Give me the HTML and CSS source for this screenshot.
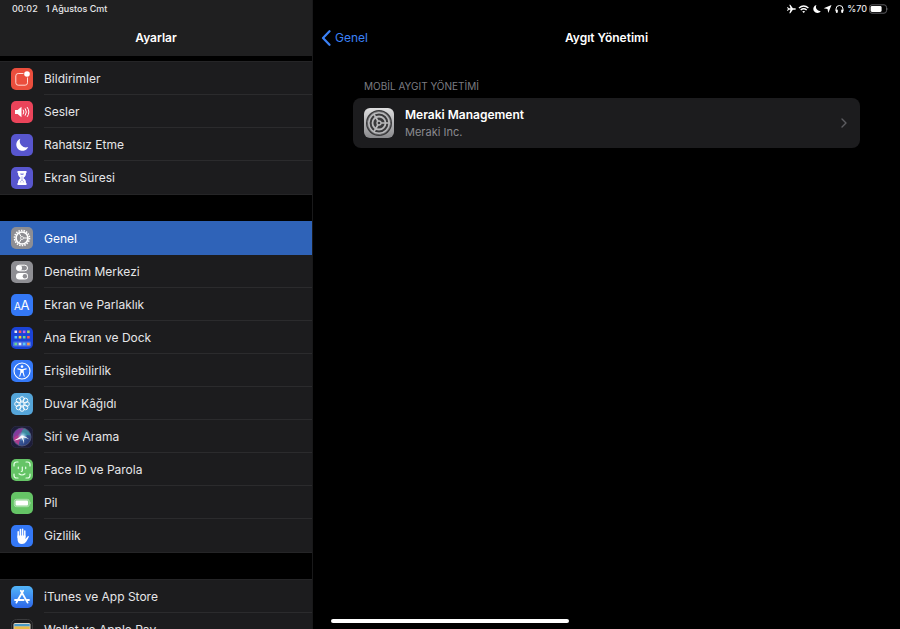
FILE: index.html
```html
<!DOCTYPE html>
<html lang="tr">
<head>
<meta charset="utf-8">
<meta name="viewport" content="width=device-width, initial-scale=1">
<title>Ayarlar</title>
<link rel="stylesheet" href="styles.css">
</head>
<body>
<div class="screen">
  <aside class="sidebar">
    <header class="bar bar-side">
      <div class="status"><time>00:02</time><span>1 Ağustos Cmt</span></div>
      <h1 class="title">Ayarlar</h1>
    </header>
    <nav class="menu">
      <ul class="group">
        <li><a class="row" href="#bildirimler">
          <svg class="icon" viewBox="0 0 22 22"><rect width="22" height="22" rx="5" fill="#eb4e3d"/><path d="M12.500 5.500H7.200a2.400 2.400 0 0 0-2.400 2.400v6.900a2.400 2.400 0 0 0 2.400 2.400h6.900a2.400 2.400 0 0 0 2.400-2.400V9.500" fill="none" stroke="#ffd9d3" stroke-width="1"/><circle cx="16" cy="6" r="2.800" fill="#fff"/></svg>
          <span class="label">Bildirimler</span></a></li>
        <li><a class="row" href="#sesler">
          <svg class="icon" viewBox="0 0 22 22"><rect width="22" height="22" rx="5" fill="#ea445a"/><path d="M4 9h2.600L10.500 5.700v10.600L6.600 13H4z" fill="#fff"/><path d="M12.300 9q1.300 2 0 4M14.300 7.700q2.300 3.300 0 6.600M16.300 6.400q3.300 4.600 0 9.200" fill="none" stroke="#fff" stroke-width="1" stroke-linecap="round"/></svg>
          <span class="label">Sesler</span></a></li>
        <li><a class="row" href="#rahatsiz-etme">
          <svg class="icon" viewBox="0 0 22 22"><rect width="22" height="22" rx="5" fill="#5856ce"/><path d="M9.300 4.800a6.200 6.200 0 1 0 7.900 8.200A6.200 6.200 0 0 1 9.300 4.800z" fill="#fff"/></svg>
          <span class="label">Rahatsız Etme</span></a></li>
        <li><a class="row" href="#ekran-suresi">
          <svg class="icon" viewBox="0 0 22 22"><rect width="22" height="22" rx="5" fill="#5856ce"/><path d="M6.500 4h9v2H15c0 2.500-.8 3.700-2.600 5 1.800 1.300 2.600 2.500 2.600 5h.5v2h-9v-2H7c0-2.500.8-3.700 2.600-5C7.800 9.700 7 8.500 7 6h-.5z" fill="#fff"/><path d="M9 6.500h4l-1.700 3v3l2 3H8.700l2-3v-3z" fill="#8c8be0"/><path d="M9.200 8h3.600L11 10zM11 13l2 2.800H9z" fill="#fff"/></svg>
          <span class="label">Ekran Süresi</span></a></li>
      </ul>
      <ul class="group">
        <li><a class="row selected" href="#genel" aria-current="page">
          <svg class="icon" viewBox="0 0 22 22"><rect width="22" height="22" rx="5" fill="#8e8e93"/><g fill="none" stroke="#fff"><circle cx="11" cy="11" r="7.500" stroke-width="1.600" stroke-dasharray="1.500 1.118"/><circle cx="11" cy="11" r="6" stroke-width="1.700"/><circle cx="11" cy="11" r="1.500" stroke-width=".7"/><path d="M12.500 11h4M10.200 9.700l-2.100-3.600M10.200 12.300l-2.100 3.600" stroke-width="1"/></g></svg>
          <span class="label">Genel</span></a></li>
        <li><a class="row" href="#denetim-merkezi">
          <svg class="icon" viewBox="0 0 22 22"><rect width="22" height="22" rx="5" fill="#8e8e93"/><rect x="5.500" y="4.200" width="11" height="5.600" rx="2.800" fill="none" stroke="#fff"/><circle cx="8.200" cy="7" r="2.800" fill="#fff"/><rect x="5" y="12" width="12" height="6.400" rx="3.200" fill="#fff"/><circle cx="13.900" cy="15.200" r="2.200" fill="#8e8e93"/></svg>
          <span class="label">Denetim Merkezi</span></a></li>
        <li><a class="row" href="#ekran-parlaklik">
          <svg class="icon" viewBox="0 0 22 22"><rect width="22" height="22" rx="5" fill="#3478f6"/><g class="letters" fill="#fff"><text x="3" y="16" font-size="10">A</text><text x="9.500" y="16" font-size="13">A</text></g></svg>
          <span class="label">Ekran ve Parlaklık</span></a></li>
        <li><a class="row" href="#ana-ekran">
          <svg class="icon" viewBox="0 0 22 22"><rect width="22" height="22" rx="5" fill="#1b43d6"/><rect x="2" y="14.500" width="18" height="5" rx="1.200" fill="#4c70e4"/><g><path fill="#e8e8ee" d="M3.500 3.500h2.600v2.600H3.500zM7.700 15.700h2.600v2.600H7.700z"/><path fill="#ff5c50" d="M7.700 3.500h2.600v2.600H7.700zM16.100 8.900h2.600v2.600h-2.600z"/><path fill="#c069e8" d="M11.900 3.500h2.600v2.600h-2.600z"/><path fill="#b3d65a" d="M16.100 3.500h2.600v2.600h-2.600z"/><path fill="#58c8fa" d="M3.500 8.900h2.600v2.600H3.500zM11.900 15.700h2.600v2.600h-2.600z"/><path fill="#ffc635" d="M7.700 8.900h2.600v2.600H7.700z"/><path fill="#65d890" d="M11.900 8.900h2.600v2.600h-2.600zM3.500 15.700h2.600v2.600H3.500z"/><path fill="#ff9b43" d="M16.100 15.700h2.600v2.600h-2.600z"/></g></svg>
          <span class="label">Ana Ekran ve Dock</span></a></li>
        <li><a class="row" href="#erisilebilirlik">
          <svg class="icon" viewBox="0 0 22 22"><rect width="22" height="22" rx="5" fill="#3478f6"/><circle cx="11" cy="11" r="8" fill="none" stroke="#fff" stroke-width="1.100"/><circle cx="11" cy="6.600" r="1.300" fill="#fff"/><path d="M6.800 8.900l3.200.7v2.600l-1.200 4M15.200 8.900l-3.200.7v2.600l1.200 4" fill="none" stroke="#fff" stroke-width="1.100" stroke-linecap="round" stroke-linejoin="round"/><path d="M9.600 9.100h2.800v3.700H9.600z" fill="#fff"/></svg>
          <span class="label">Erişilebilirlik</span></a></li>
        <li><a class="row" href="#duvar-kagidi">
          <svg class="icon" viewBox="0 0 22 22"><rect width="22" height="22" rx="5" fill="#55a5d9"/><g fill="none" stroke="#fff" stroke-width=".9"><circle cx="11" cy="11" r="2"/><circle cx="11" cy="6" r="2.300"/><circle cx="14.500" cy="7.500" r="2.300"/><circle cx="16" cy="11" r="2.300"/><circle cx="14.500" cy="14.500" r="2.300"/><circle cx="11" cy="16" r="2.300"/><circle cx="7.500" cy="14.500" r="2.300"/><circle cx="6" cy="11" r="2.300"/><circle cx="7.500" cy="7.500" r="2.300"/></g></svg>
          <span class="label">Duvar Kâğıdı</span></a></li>
        <li><a class="row" href="#siri">
          <svg class="icon" viewBox="0 0 22 22"><defs><linearGradient id="orb" x1="0" y1="0" x2="1" y2="1"><stop offset="0" stop-color="#6230b4"/><stop offset=".3" stop-color="#8c3c96"/><stop offset=".55" stop-color="#3a5c9c"/><stop offset="1" stop-color="#202d6c"/></linearGradient><radialGradient id="glow"><stop offset="0" stop-color="#fff"/><stop offset=".4" stop-color="#bceaff" stop-opacity=".6"/><stop offset="1" stop-color="#67c8e8" stop-opacity="0"/></radialGradient></defs><rect x=".3" y=".3" width="21.400" height="21.400" rx="5" fill="#1d1d3a" stroke="#34344c" stroke-width=".6"/><circle cx="11" cy="11" r="9" fill="url(#orb)" stroke="#606581" stroke-width=".7"/><path d="M11 11Q9 5 13 2.500q5 2 6.500 7Q15 8 11 11" fill="#369a9d" opacity=".75"/><path d="M11 11q-4-4-8.500 1.500Q4 17 8 19q0-5 3-8" fill="#ca3689" opacity=".75"/><circle cx="11.500" cy="10.500" r="5" fill="url(#glow)"/><path d="M3 14.500Q7 12.500 10.500 9.500 15 10 18.500 13.500 15 11.500 12 11.500q1.500 3 1 6.500-.7-3.500-2.300-6Q7 14 3 14.500" fill="#fff" opacity=".9"/></svg>
          <span class="label">Siri ve Arama</span></a></li>
        <li><a class="row" href="#face-id">
          <svg class="icon" viewBox="0 0 22 22"><rect width="22" height="22" rx="5" fill="#65c466"/><g fill="none" stroke="#e7ffe7" stroke-width="1.200" stroke-linecap="round"><path d="M3 7V5.500A2.500 2.500 0 0 1 5.500 3H7M15 3h1.500A2.500 2.500 0 0 1 19 5.500V7M19 15v1.500a2.500 2.500 0 0 1-2.500 2.500H15M7 19H5.500A2.500 2.500 0 0 1 3 16.500V15M7.300 8v1.600M14.700 8v1.600M11.300 8v3.700q0 .8-1 .8M8 14.800q3 2.400 6 0"/></g></svg>
          <span class="label">Face ID ve Parola</span></a></li>
        <li><a class="row" href="#pil">
          <svg class="icon" viewBox="0 0 22 22"><rect width="22" height="22" rx="5" fill="#65c466"/><rect x="3.300" y="7.300" width="15" height="7.400" rx="2" fill="#8bd48b" stroke="#a9dfaa"/><rect x="4.600" y="8.500" width="12.400" height="5" rx="1" fill="#fff"/><path d="M19.300 9.500q1.600 1.500 0 3z" fill="#b2e3b2"/></svg>
          <span class="label">Pil</span></a></li>
        <li><a class="row" href="#gizlilik">
          <svg class="icon" viewBox="0 0 22 22"><rect width="22" height="22" rx="5" fill="#3478f6"/><path d="M6.500 10.500h8v3.500l2-2.500q1-.8 1.500 0-1.400 3.100-2.800 5.200-1.500 2.300-4.200 2.300-4.500 0-4.500-5z" fill="#fff"/><path d="M7.200 12.500V6.700M9.400 12V4.600M11.600 12V4.200M13.800 12V5.900" stroke="#fff" stroke-width="1.500" stroke-linecap="round"/></svg>
          <span class="label">Gizlilik</span></a></li>
      </ul>
      <ul class="group">
        <li><a class="row" href="#itunes">
          <svg class="icon" viewBox="0 0 22 22"><defs><linearGradient id="store" x2="0" y2="1"><stop offset="0" stop-color="#52b5f8"/><stop offset="1" stop-color="#2e67e9"/></linearGradient></defs><rect width="22" height="22" rx="5" fill="url(#store)"/><path d="M12.200 4.800L7 13.800M9.800 4.800l6.800 11.800M4 14h8.700M15.300 14H18M6.200 15.200l-.8 1.400" fill="none" stroke="#fff" stroke-width="1.800" stroke-linecap="round"/></svg>
          <span class="label">iTunes ve App Store</span></a></li>
        <li><a class="row" href="#wallet">
          <svg class="icon" viewBox="0 0 22 22"><rect x=".5" y=".5" width="21" height="21" rx="5" fill="#1c1c1e" stroke="#3b3b3d"/><rect x="2.500" y="4" width="17" height="14" rx="1.500" fill="#d9d5c6"/><path fill="#4a9bc8" d="M3.300 5h15.400v2.500H3.300z"/><path fill="#e9b944" d="M3.300 7.500h15.400V10H3.300z"/><path fill="#73b666" d="M3.300 10h15.400v2.500H3.300z"/><path fill="#df6954" d="M3.300 12.500h15.400V15H3.300z"/></svg>
          <span class="label">Wallet ve Apple Pay</span></a></li>
      </ul>
    </nav>
  </aside>
  <main class="detail">
    <header class="bar">
      <div class="status status-end">
        <svg class="glyphs" viewBox="0 0 58 12" role="img" aria-label="Uçak modu, Wi-Fi, Rahatsız Etme, konum, kulaklık"><g fill="#fff"><path d="M9 6q0-.8-1.300-.8H5.900L3.300 1.700h-1l1.200 3.500H1.800L.9 4.100H.2L.8 6 .2 7.900h.7l.9-1.100h1.700l-1.200 3.500h1l2.600-3.500h1.800Q9 6.800 9 6z"/><path d="M15.200 8.500q1.500-1.200 3 0L16.700 10z"/><path d="M29.500 2a4 4 0 1 0 4.300 5.900A4 4 0 0 1 29.500 2z"/><path d="M44.500 2l-3.200 8-.8-4-3.800-.8z"/><rect x="48.800" y="6.600" width="2" height="3.300" rx=".8"/><rect x="54.200" y="6.600" width="2" height="3.300" rx=".8"/></g><g fill="none" stroke="#fff"><path d="M12 5q4.700-4.200 9.400 0M13.700 7q3-2.500 6 0" stroke-width="1.400"/><path d="M49 8V6a3.500 3.500 0 0 1 7 0v2" stroke-width="1"/></g></svg>
        <span>%70</span>
        <svg class="battery" viewBox="0 0 20 10" role="img" aria-label="Pil"><rect x=".5" y=".8" width="17" height="8.400" rx="2.500" fill="none" stroke="#5c5c60"/><rect x="1.600" y="2" width="11" height="6" rx="1.400" fill="#fff"/><path d="M18.500 3.500q1.500 1.500 0 3z" fill="#5c5c60"/></svg>
      </div>
      <div class="navbar">
        <a class="back" href="#genel"><svg class="chevron-back" viewBox="0 0 10 16"><path d="M8.500 1.200L2 8l6.500 6.800" fill="none" stroke="#3b82f7" stroke-width="2.200" stroke-linecap="round" stroke-linejoin="round"/></svg>Genel</a>
        <h2 class="title">Aygıt Yönetimi</h2>
      </div>
    </header>
    <section class="profiles">
      <h3 class="caption">MOBİL AYGIT YÖNETİMİ</h3>
      <a class="card" href="#meraki">
        <svg class="profile-icon" viewBox="0 0 30 30"><defs><linearGradient id="metal" x2="0" y2="1"><stop offset="0" stop-color="#dededf"/><stop offset="1" stop-color="#89898c"/></linearGradient></defs><rect width="30" height="30" rx="6" fill="url(#metal)"/><circle cx="15" cy="15" r="13" fill="#39393b"/><g fill="none" stroke="#b9b9bb"><circle cx="15" cy="15" r="11.300" stroke-width=".8" stroke-dasharray=".8 .5"/><circle cx="15" cy="15" r="10.200" stroke-width="1.600"/><circle cx="15" cy="15" r="6.500" stroke-width="1.800"/><circle cx="15" cy="15" r="2" stroke-width="1.300"/><path d="M17 15h8.500M14 13.300L9.700 5.900M14 16.700l-4.300 7.400" stroke-width="1.700"/></g></svg>
        <span class="profile"><strong class="name">Meraki Management</strong><span class="vendor">Meraki Inc.</span></span>
        <svg class="chevron" viewBox="0 0 6 10"><path d="M1 1l4 4-4 4" fill="none" stroke="#5c5c60" stroke-width="1.400" stroke-linecap="round" stroke-linejoin="round"/></svg>
      </a>
    </section>
  </main>
  <div class="home-indicator"></div>
</div>
</body>
</html>
```

FILE: styles.css
```css
* { box-sizing: border-box; }

body {
  margin: 0;
  background: #000;
  color: #e6e6e8;
  font: 12px/16px Inter, "Liberation Sans", sans-serif;
}

h1, h2, h3, ul { margin: 0; padding: 0; list-style: none; }

a { color: inherit; text-decoration: none; }

svg { display: block; flex: none; }

.screen {
  position: relative;
  display: flex;
  height: 100vh;
  overflow: hidden;
}

.sidebar {
  flex: 0 0 313px;
  border-right: 1px solid #19191a;
  overflow: hidden;
}

.detail { flex: 1; min-width: 0; }

.bar { height: 56px; }

.bar-side { background: #1f1f20; }

.status {
  display: flex;
  align-items: center;
  gap: 8px;
  height: 18px;
  padding: 0 12px;
  font-size: 9px;
  font-weight: 500;
  line-height: 18px;
}

.status-end { justify-content: flex-end; gap: 2px; padding-right: 11px; }

.glyphs { width: 58px; height: 12px; }

.battery { width: 20px; height: 10px; }

.title {
  color: #fff;
  font-size: 12px;
  font-weight: 600;
  line-height: 39px;
  text-align: center;
}

.menu {
  display: flex;
  flex-direction: column;
  gap: 26px;
  padding-top: 5px;
}

.group {
  background: #1c1c1e;
  border-top: 1px solid #252527;
  border-bottom: 1px solid #252527;
}

.row {
  display: flex;
  align-items: center;
  gap: 11px;
  height: 33px;
  padding-left: 11px;
}

.icon { width: 22px; height: 22px; }

.letters { font-family: Inter, sans-serif; }

.label {
  flex: 1;
  height: 33px;
  line-height: 34px;
  border-bottom: 1px solid #2b2b2d;
}

li:last-child .label { border-bottom-color: transparent; }

/* The highlight also covers the group's top border. */
.selected {
  height: 34px;
  margin-top: -1px;
  background: #2f63b8;
  color: #fff;
}

.selected .label { border-bottom-color: transparent; }

.navbar {
  display: grid;
  grid-template-columns: 1fr auto 1fr;
  padding: 0 8px;
}

.back {
  display: flex;
  align-items: center;
  gap: 4px;
  color: #3b82f7;
}

.chevron-back { width: 10px; height: 16px; }

.profiles { padding: 23px 40px; }

.caption {
  padding: 0 11px;
  color: #7c7c82;
  font-size: 10px;
  font-weight: 400;
  line-height: 14px;
}

.card {
  display: flex;
  align-items: center;
  gap: 11px;
  height: 50px;
  margin-top: 5px;
  padding: 0 13px 0 11px;
  border-radius: 8px;
  background: #1c1c1e;
}

.profile-icon { width: 30px; height: 30px; }

.profile { flex: 1; display: flex; flex-direction: column; }

.name { color: #fff; font-weight: 600; line-height: 18px; }

.vendor { color: #8a8a8f; font-size: 11px; line-height: 16px; }

.chevron { width: 6px; height: 10px; }

/* Floats above both panes, centred on the whole screen. */
.home-indicator {
  position: absolute;
  bottom: 6px;
  left: 50%;
  width: 238px;
  height: 4px;
  margin-left: -119px;
  border-radius: 2px;
  background: #fff;
}
```
